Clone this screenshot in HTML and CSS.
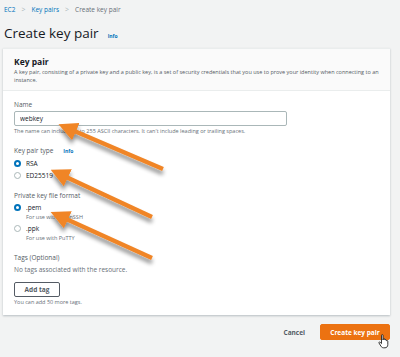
FILE: index.html
```html
<!DOCTYPE html>
<html lang="en">
<head>
  <meta charset="UTF-8" />
  <title>Create key pair | EC2</title>
  <link rel="stylesheet" href="styles.css">
</head>
<body>
  <div class="page">
    <nav class="breadcrumbs">
      <a href="#">EC2</a>
      <span class="sep">&gt;</span>
      <a href="#">Key pairs</a>
      <span class="sep">&gt;</span>
      <span class="current">Create key pair</span>
    </nav>

    <h1>Create key pair <a href="#" class="info">Info</a></h1>

    <div class="panel">
      <div class="panel-header">
        <h2>Key pair</h2>
        <p>A key pair, consisting of a private key and a public key, is a set of security credentials that you use to prove your identity when connecting to an instance.</p>
      </div>

      <div class="panel-body">
        <div class="field">
          <label class="field-label">Name</label>
          <input type="text" class="text-input" value="webkey">
          <div class="hint">The name can include up to 255 ASCII characters. It can't include leading or trailing spaces.</div>
        </div>

        <div class="field">
          <label class="field-label">Key pair type <a href="#" class="info">Info</a></label>
          <div class="radio-row"><span class="radio checked"></span><span>RSA</span></div>
          <div class="radio-row"><span class="radio"></span><span>ED25519</span></div>
        </div>

        <div class="field">
          <label class="field-label">Private key file format</label>
          <div class="radio-row"><span class="radio checked"></span>
            <div><div>.pem</div><div class="hint">For use with OpenSSH</div></div>
          </div>
          <div class="radio-row"><span class="radio"></span>
            <div><div>.ppk</div><div class="hint">For use with PuTTY</div></div>
          </div>
        </div>

        <div class="field last">
          <label class="field-label">Tags (Optional)</label>
          <div class="muted">No tags associated with the resource.</div>
          <button class="btn-normal">Add tag</button>
          <div class="hint">You can add 50 more tags.</div>
        </div>
      </div>
    </div>

    <div class="actions">
      <a href="#" class="cancel">Cancel</a>
      <button class="btn-primary">Create key pair</button>
    </div>
  </div>

  <!-- callout arrows drawn over the form -->
  <svg class="arrows" width="400" height="357" viewBox="0 0 400 357">
    <defs>
      <filter id="shadow" x="-20%" y="-20%" width="140%" height="160%">
        <feGaussianBlur in="SourceAlpha" stdDeviation="2.2"/>
        <feOffset dx="0" dy="4" result="b"/>
        <feComponentTransfer><feFuncA type="linear" slope="0.45"/></feComponentTransfer>
        <feMerge><feMergeNode/><feMergeNode in="SourceGraphic"/></feMerge>
      </filter>
      <marker id="head" markerWidth="4.5" markerHeight="4.5" refX="1" refY="2.25" orient="auto" markerUnits="strokeWidth">
        <path d="M0,0 L4.5,2.25 L0,4.5 Z" fill="#f08526"/>
      </marker>
    </defs>
    <g filter="url(#shadow)" stroke="#f08526" stroke-width="4.2" fill="none">
      <line x1="163" y1="169" x2="72" y2="130" marker-end="url(#head)"/>
      <line x1="152" y1="217" x2="64" y2="176" marker-end="url(#head)"/>
      <line x1="152" y1="258" x2="64" y2="218" marker-end="url(#head)"/>
    </g>
  </svg>

  <svg class="cursor" width="12" height="15" viewBox="0 0 12 15">
    <path d="M3.5 1.2 C3.5 0.5 5 0.5 5 1.2 L5 6 L5.3 5 C5.5 4.4 6.7 4.4 6.8 5 L6.8 6 C7 5.4 8.2 5.4 8.3 6 L8.3 6.8 C8.6 6.3 9.8 6.4 9.8 7.1 L9.8 10.5 C9.8 12.5 8.8 13.8 7 13.8 L5.5 13.8 C4.2 13.8 3.5 13 2.8 12 L1 9 C0.6 8.3 1.5 7.6 2.2 8.3 L3.5 9.6 Z" fill="#fff" stroke="#222" stroke-width="0.9"/>
  </svg>
</body>
</html>
```
FILE: styles.css
```css
* {
  margin: 0;
  padding: 0;
  box-sizing: border-box;
}

body {
  width: 400px;
  height: 357px;
  background-color: #f2f3f3;
  color: #16191f;
  font-family: 'Open Sans', 'Liberation Sans', sans-serif;
  font-size: 6px;
  position: relative;
  overflow: hidden;
}

a {
  color: #0073bb;
  text-decoration: none;
}

.page {
  padding: 3px 10px 0 3px;
}

.breadcrumbs {
  display: flex;
  align-items: center;
  gap: 6px;
  font-size: 6.5px;
  padding: 1px 0 0 1px;
  height: 12px;
}

.breadcrumbs .sep {
  color: #aab7b8;
  font-size: 7px;
}

.breadcrumbs .current {
  color: #687078;
}

h1 {
  font-size: 13.5px;
  font-weight: 400;
  color: #16191f;
  padding: 9px 0 0 1px;
  height: 33px;
  display: flex;
  align-items: baseline;
  gap: 9px;
}

.info {
  font-size: 5px;
  font-weight: 700;
}

.panel {
  background: #fff;
  box-shadow: 0 1px 2px rgba(0, 27, 43, 0.25);
  border-top: 1px solid #eaeded;
}

.panel-header {
  background: #fafafa;
  border-bottom: 1px solid #eaeded;
  padding: 7px 11px 6px;
}

.panel-header h2 {
  font-size: 8.5px;
  font-weight: 700;
  line-height: 12px;
}

.panel-header p {
  font-size: 5.5px;
  line-height: 8px;
  color: #545b64;
}

.panel-body {
  padding: 9px 11px 9px;
}

.field {
  margin-bottom: 11px;
}

.field.last {
  margin-bottom: 0;
}

.field-label {
  display: flex;
  gap: 10px;
  align-items: baseline;
  font-size: 6.5px;
  color: #545b64;
  line-height: 9px;
  margin-bottom: 2px;
}

.text-input {
  width: 273px;
  height: 15px;
  border: 1px solid #aab7b8;
  border-radius: 2px;
  padding: 0 5px;
  font-family: inherit;
  font-size: 6.5px;
  color: #16191f;
}

.hint {
  font-size: 5.5px;
  color: #687078;
  line-height: 8px;
  margin-top: 1px;
}

.radio-row {
  display: flex;
  align-items: flex-start;
  gap: 5px;
  font-size: 6.5px;
  line-height: 9px;
  margin-top: 3px;
}

.radio {
  width: 7px;
  height: 7px;
  border-radius: 50%;
  border: 1px solid #aab7b8;
  margin-top: 1px;
  flex: none;
}

.radio.checked {
  border: 2px solid #0073bb;
}

.muted {
  font-size: 6.5px;
  color: #687078;
  line-height: 9px;
  margin-top: 3px;
  margin-bottom: 8px;
}

.btn-normal {
  display: block;
  font-family: inherit;
  font-size: 6.5px;
  font-weight: 700;
  color: #545b64;
  background: #fff;
  border: 1px solid #545b64;
  border-radius: 2px;
  width: 46px;
  height: 15px;
}

.actions {
  display: flex;
  justify-content: flex-end;
  align-items: center;
  gap: 15px;
  padding-top: 9px;
}

.cancel {
  color: #545b64;
  font-weight: 700;
  font-size: 6.5px;
}

.btn-primary {
  font-family: inherit;
  font-size: 6.5px;
  font-weight: 700;
  color: #fff;
  background: #ec7211;
  border: 1px solid #ec7211;
  border-radius: 2px;
  width: 70px;
  height: 16px;
}

.arrows {
  position: absolute;
  left: 0;
  top: 0;
  pointer-events: none;
}

.cursor {
  position: absolute;
  left: 378px;
  top: 334px;
}
```
